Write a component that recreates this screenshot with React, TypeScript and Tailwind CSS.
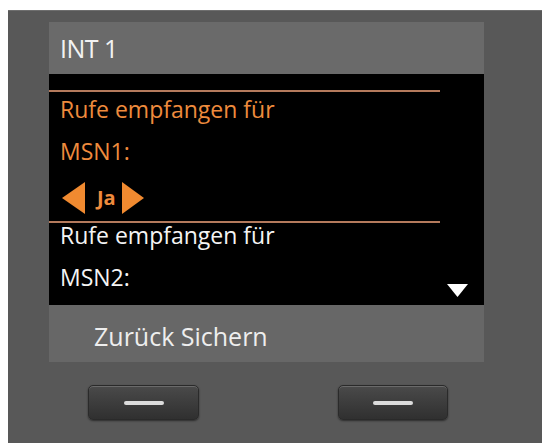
export default function App() {
  const font = { fontFamily: '"Open Sans", "Noto Sans", sans-serif' };
  return (
    <div className="w-[542px] h-[443px] bg-white overflow-hidden" style={font}>
      <div className="ml-[8px] mt-[10px] w-[534px] h-[433px] bg-[#585858] border-t border-[#6e6e6e] pt-[11px] pl-[41px]">
        <div className="w-[435px]">
          {/* title bar */}
          <div className="h-[52px] bg-[#6a6a6a] pl-[11px] text-[25px] leading-[52px] text-[#f2f2f2] tracking-[-0.5px]">
            INT 1
          </div>

          {/* display */}
          <div className="h-[231px] bg-black pt-[16px]">
            <div className="h-[2px] w-[391px] bg-[#b47a5c]" />
            <div className="pl-[11px] text-[23px] leading-[34px] text-[#ee8b3d]">
              Rufe empfangen für
            </div>
            <div className="pl-[11px] mt-[8px] text-[23px] leading-[34px] text-[#ee8b3d]">
              MSN1:
            </div>
            <div className="pl-[13px] mt-[14px] h-[32px] flex items-center">
              <svg width="23" height="32" viewBox="0 0 23 32">
                <polygon points="23,0 23,32 0,16" fill="#f08a30" />
              </svg>
              <span className="ml-[12px] text-[20px] font-bold text-[#ee8b3d] leading-[32px]">Ja</span>
              <svg width="22" height="32" viewBox="0 0 22 32" className="ml-[6px]">
                <polygon points="0,0 0,32 22,16" fill="#f08a30" />
              </svg>
            </div>
            <div className="mt-[7px] h-[2px] w-[391px] bg-[#b47a5c]" />
            <div className="pl-[11px] mt-[1px] text-[23px] leading-[22px] text-[#f4f4f4]">
              Rufe empfangen für
            </div>
            <div className="pl-[11px] mt-[20px] flex justify-between">
              <span className="text-[23px] leading-[22px] text-[#f4f4f4]">MSN2:</span>
              <svg width="21" height="13" viewBox="0 0 21 13" className="mt-[18px] mr-[16px]">
                <polygon points="0,0 21,0 10.5,13" fill="#ffffff" />
              </svg>
            </div>
          </div>

          {/* soft key labels */}
          <div className="h-[57px] bg-[#676767] pt-[6px] pl-[45px] text-[25px] leading-[51px] text-[#eeeeee]">
            Zurück Sichern
          </div>

          {/* soft keys */}
          <div className="mt-[23px] flex">
            <button className="ml-[39px] w-[111px] h-[35px] rounded-[5px] bg-gradient-to-b from-[#4a4a4a] to-[#303030] border border-[#2a2a2a] shadow-[inset_0_1px_0_#6a6a6a,0_1px_2px_rgba(0,0,0,0.5)] flex items-center justify-center">
              <span className="block w-[40px] h-[4px] rounded-full bg-[#dcdcdc]" />
            </button>
            <button className="ml-[139px] w-[110px] h-[35px] rounded-[5px] bg-gradient-to-b from-[#4a4a4a] to-[#303030] border border-[#2a2a2a] shadow-[inset_0_1px_0_#6a6a6a,0_1px_2px_rgba(0,0,0,0.5)] flex items-center justify-center">
              <span className="block w-[40px] h-[4px] rounded-full bg-[#dcdcdc]" />
            </button>
          </div>
        </div>
      </div>
    </div>
  );
}
